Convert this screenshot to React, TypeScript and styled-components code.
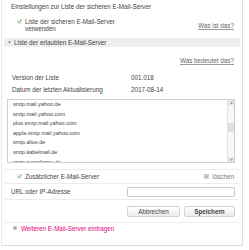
import React from 'react';
import styled, { createGlobalStyle } from 'styled-components';

const GlobalStyle = createGlobalStyle`
  html, body {
    margin: 0;
    padding: 0;
    background: #ffffff;
  }
  body {
    font-family: "Liberation Sans", Arial, sans-serif;
    font-size: 6.3px;
    color: #444;
  }
`;

const Panel = styled.div`
  width: 242px;
  height: 246px;
  box-sizing: border-box;
  margin-left: 1px;
  border-left: 1px solid #e8e8e8;
  border-right: 1px solid #dcdcdc;
  border-bottom: 1px solid #dcdcdc;
  display: flex;
  flex-direction: column;
`;

const Title = styled.div`
  padding: 3px 0 0 9px;
  height: 8px;
  line-height: 7px;
  color: #444;
`;

const Row = styled.div<{ top?: number; height?: number }>`
  display: flex;
  align-items: center;
  justify-content: space-between;
  margin-top: ${p => p.top ?? 0}px;
  height: ${p => p.height ?? 10}px;
  padding: 0 8px 0 9px;
`;

const CheckLabel = styled.label<{ width?: number }>`
  display: flex;
  align-items: flex-start;
  gap: 3px;
  width: ${p => (p.width ? `${p.width}px` : 'auto')};
  line-height: 7.5px;
  padding-left: 6px;
`;

const Link = styled.a`
  color: #666;
  text-decoration: underline;
  text-decoration-color: #999;
  cursor: pointer;
`;

const SectionBar = styled.div`
  margin: 5px 2px 0 2px;
  height: 9px;
  background: #eeeeee;
  display: flex;
  align-items: center;
  padding-left: 4px;
  gap: 3px;
  color: #444;
`;

const InfoRow = styled.div<{ top?: number }>`
  display: grid;
  grid-template-columns: 119px 1fr;
  margin-top: ${p => p.top ?? 0}px;
  padding-left: 10px;
  height: 8px;
  line-height: 8px;
`;

const ListBox = styled.div`
  margin: 5px 7px 0 5px;
  height: 64px;
  box-sizing: border-box;
  border: 1px solid #cfcfcf;
  display: flex;
  overflow: hidden;
`;

const ListItems = styled.div`
  flex: 1;
  padding: 0 0 0 5px;
  font-size: 5.5px;
  line-height: 9.6px;
  color: #444;
  overflow: hidden;
`;

const ScrollTrack = styled.div`
  width: 6px;
  background: #f7f7f7;
  border-left: 1px solid #e4e4e4;
  display: flex;
  flex-direction: column;
  justify-content: space-between;
  align-items: center;
  position: relative;
`;

const ScrollArrow = styled.div`
  width: 6px;
  height: 5px;
  background: #e6e6e6;
  display: flex;
  align-items: center;
  justify-content: center;
`;

const ScrollThumb = styled.div`
  position: absolute;
  top: 23px;
  left: 0;
  width: 6px;
  height: 9px;
  background: #e0e0e0;
`;

const Divider = styled.div<{ top?: number }>`
  margin: ${p => p.top ?? 0}px 3px 0 3px;
  height: 1px;
  background: #ececec;
`;

const Delete = styled.span`
  display: flex;
  align-items: center;
  gap: 3px;
  color: #777;
`;

const FieldRow = styled.div`
  display: grid;
  grid-template-columns: 116px 1fr;
  align-items: center;
  padding: 0 7px 0 9px;
  height: 15px;
`;

const TextInput = styled.input`
  height: 10px;
  box-sizing: border-box;
  border: 1px solid #cccccc;
  border-radius: 1px;
  padding: 0;
  font-size: 6px;
  width: 108px;
`;

const Buttons = styled.div`
  display: flex;
  justify-content: flex-end;
  gap: 4px;
  padding: 6px 7px 0 0;
  height: 11px;
`;

const Button = styled.button<{ primary?: boolean }>`
  height: 11px;
  width: ${p => (p.primary ? 51 : 53)}px;
  padding: 0;
  border: 1px solid #d2d2d2;
  border-radius: 2px;
  background: linear-gradient(#ffffff, #ececec);
  font-family: "Liberation Sans", Arial, sans-serif;
  font-size: 6.3px;
  font-weight: ${p => (p.primary ? 700 : 400)};
  color: #444;
  cursor: pointer;
`;

const AddLink = styled.div`
  display: flex;
  align-items: center;
  gap: 4px;
  padding: 1px 0 0 11px;
  color: #e5007d;
  height: 8px;
`;

const CheckIcon = () => (
  <svg width="5" height="5" viewBox="0 0 10 10" style={{ flexShrink: 0, marginTop: 1 }}>
    <rect x="0.5" y="0.5" width="9" height="9" rx="1.5" fill="#fff" stroke="#c9c9c9" />
    <path d="M2.2 5.2 L4.2 7.4 L8.4 1.8" fill="none" stroke="#3aa83a" strokeWidth="1.8" strokeLinecap="round" strokeLinejoin="round" />
  </svg>
);

const servers = [
  'smtp.mail.yahoo.de',
  'smtp.mail.yahoo.com',
  'plus.smtp.mail.yahoo.com',
  'apple.smtp.mail.yahoo.com',
  'smtp.alice.de',
  'smtp.kabelmail.de',
  'smtp.netcologne.de',
];

export default function App() {
  return (
    <>
      <GlobalStyle />
      <Panel>
        <Title>Einstellungen zur Liste der sicheren E-Mail-Server</Title>

        <Row top={6} height={16}>
          <CheckLabel width={100}>
            <CheckIcon />
            <span>Liste der sicheren E-Mail-Server verwenden</span>
          </CheckLabel>
          <Link>Was ist das?</Link>
        </Row>

        <SectionBar>
          <svg width="3" height="3" viewBox="0 0 6 6">
            <path d="M0 1 L6 1 L3 5 Z" fill="#777" />
          </svg>
          <span>Liste der erlaubten E-Mail-Server</span>
        </SectionBar>

        <Row top={9} height={8}>
          <span />
          <Link>Was bedeutet das?</Link>
        </Row>

        <InfoRow top={10}>
          <span>Version der Liste</span>
          <span>001.018</span>
        </InfoRow>
        <InfoRow top={4}>
          <span>Datum der letzten Aktualisierung</span>
          <span>2017-08-14</span>
        </InfoRow>

        <ListBox>
          <ListItems>
            {servers.map(s => (
              <div key={s}>{s}</div>
            ))}
          </ListItems>
          <ScrollTrack>
            <ScrollArrow>
              <svg width="3" height="2" viewBox="0 0 6 4"><path d="M0 4 L3 0 L6 4 Z" fill="#999" /></svg>
            </ScrollArrow>
            <ScrollThumb />
            <ScrollArrow>
              <svg width="3" height="2" viewBox="0 0 6 4"><path d="M0 0 L3 4 L6 0 Z" fill="#999" /></svg>
            </ScrollArrow>
          </ScrollTrack>
        </ListBox>

        <Divider top={6} />
        <Row height={13}>
          <CheckLabel>
            <CheckIcon />
            <span>Zusätzlicher E-Mail-Server</span>
          </CheckLabel>
          <Delete>
            <svg width="5" height="5" viewBox="0 0 10 10">
              <rect x="0.5" y="0.5" width="9" height="9" fill="#e2e2e2" stroke="#bdbdbd" />
              <rect x="3" y="3" width="4" height="4" fill="#9a9a9a" />
            </svg>
            löschen
          </Delete>
        </Row>
        <Divider />
        <FieldRow>
          <span>URL oder IP-Adresse</span>
          <TextInput />
        </FieldRow>
        <Divider />
        <Buttons>
          <Button>Abbrechen</Button>
          <Button primary>Speichern</Button>
        </Buttons>
        <Divider top={5} />
        <AddLink>
          <svg width="4" height="4" viewBox="0 0 8 8">
            <rect x="0" y="0" width="8" height="8" fill="#cfcfcf" />
            <path d="M4 1.5 V6.5 M1.5 4 H6.5" stroke="#888" strokeWidth="1.2" />
          </svg>
          <span>Weiteren E-Mail-Server eintragen</span>
        </AddLink>
      </Panel>
    </>
  );
}
